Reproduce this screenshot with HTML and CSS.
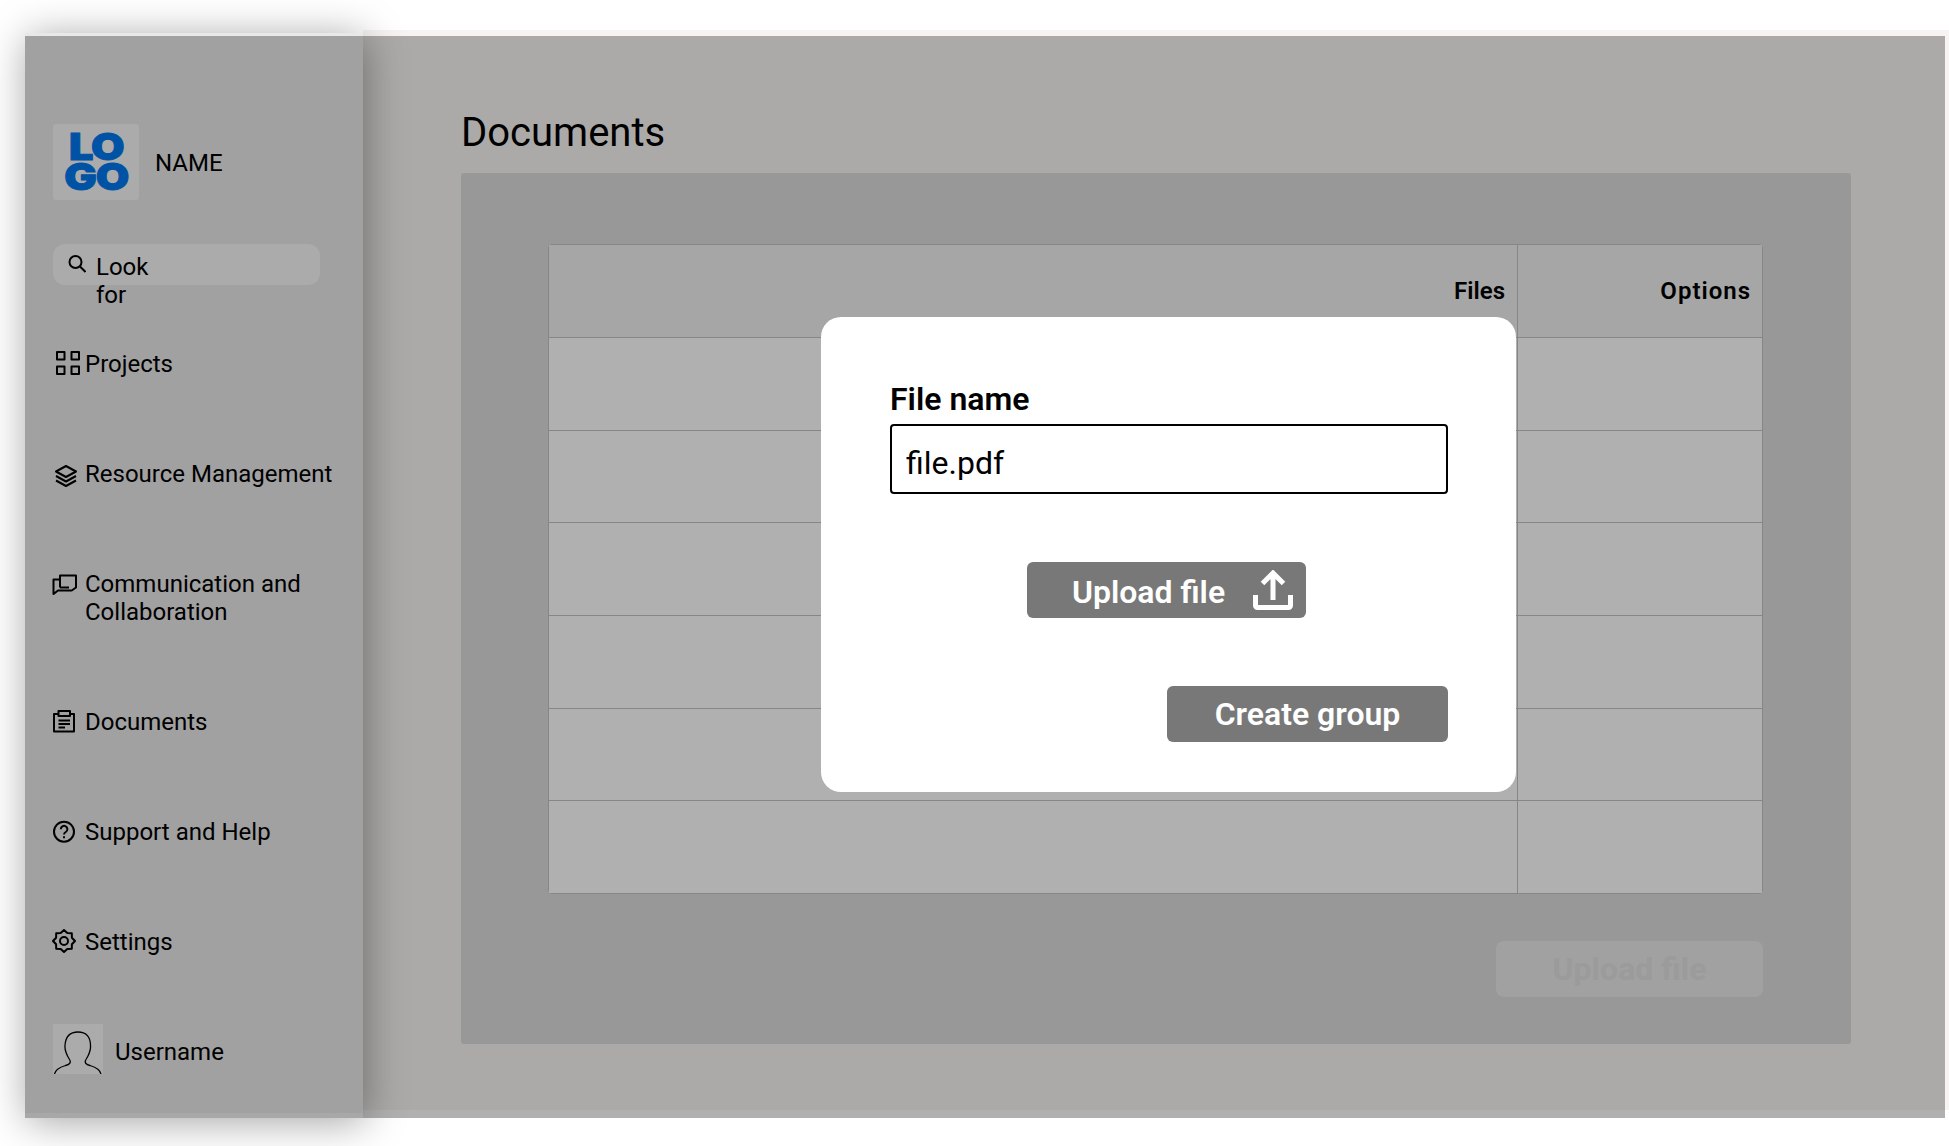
FILE: index.html

```html
<!DOCTYPE html>
<html lang="en">
<head>
  <meta charset="UTF-8" />
  <title>Documents</title>
  <link rel="stylesheet" href="styles.css">
</head>
<body>

<div class="page">
  <aside class="sidebar">
    <div class="brand">
      <div class="logo"><span>LO</span><span>GO</span></div>
      <span class="brand-name">NAME</span>
    </div>

    <div class="search">
      <svg class="search-icon" viewBox="0 0 18 18"><circle cx="7.500" cy="7" r="6"/><path d="M12 11.500l5.500 5.500"/></svg>
      <span class="search-text">Look for</span>
    </div>

    <nav class="nav">
      <a class="nav-item">
        <svg class="icon" viewBox="0 0 30 28"><rect x="5" y="2" width="7.500" height="7.500"/><rect x="19.500" y="2" width="7.500" height="7.500"/><rect x="5" y="16.500" width="7.500" height="7.500"/><rect x="19.500" y="16.500" width="7.500" height="7.500"/></svg>
        <span>Projects</span>
      </a>
      <a class="nav-item">
        <svg class="icon" viewBox="0 0 30 28"><path d="M14 6l10 5.500-10 5.500-10-5.500z"/><path d="M4 16l10 5.500L24 16"/><path d="M4 20.500L14 26l10-5.500"/></svg>
        <span>Resource Management</span>
      </a>
      <a class="nav-item">
        <svg class="icon" viewBox="0 0 30 28"><path d="M8 17.500V5.500h16v12l-5 3.500"/><path d="M8 17.500h9"/><path d="M8 9.500H1.500V24L6 20.500h13"/></svg>
        <span>Communication and Collaboration</span>
      </a>
      <a class="nav-item">
        <svg class="icon" viewBox="0 0 30 28"><path d="M6 6H2v17.500h20V6h-4"/><path d="M6.500 3H18v5H6.500z"/><path d="M6.500 12.500H18M6.500 16H18M6.500 19.500H13"/></svg>
        <span>Documents</span>
      </a>
      <a class="nav-item">
        <svg class="icon" viewBox="0 0 30 28"><circle cx="12" cy="13.700" r="10"/><path d="M8.800 11.200a3.300 3.300 0 1 1 5 2.800c-1.200.7-1.800 1.300-1.800 2.600"/><path d="M12 18.300v2"/></svg>
        <span>Support and Help</span>
      </a>
      <a class="nav-item">
        <svg class="icon" viewBox="0 0 30 28"><path d="M23 13l-3.100-3.300-.1-4.500-4.500-.15L12 2 8.700 5.050l-4.500.15-.1 4.500L1 13l3.100 3.300.1 4.500 4.500.15L12 24l3.300-3.050 4.500-.15.1-4.500z"/><circle cx="12" cy="13" r="4"/></svg>
        <span>Settings</span>
      </a>
    </nav>

    <div class="user">
      <div class="avatar">
        <svg width="50" height="50" viewBox="0 0 50 50"><path d="M1.500 50c1-5 6-7 11-8.500 4-1 6-3 4-6-3-5-5-9-4.500-14C12.500 13 17 8 25 8s12.500 5 12.500 13.500c.5 5-1.500 9-4.500 14-2 3 0 5 4 6 5 1.500 10 3.500 11 8.500"/></svg>
      </div>
      <span class="user-name">Username</span>
    </div>
  </aside>

  <div class="content">
    <main class="main">
      <h1>Documents</h1>
      <section class="panel">
        <table class="files">
          <thead>
            <tr><th class="th-files">Files</th><th class="th-options">Options</th></tr>
          </thead>
          <tbody>
            <tr><td></td><td></td></tr>
            <tr><td></td><td></td></tr>
            <tr><td></td><td></td></tr>
            <tr><td></td><td></td></tr>
            <tr><td></td><td></td></tr>
            <tr><td></td><td></td></tr>
          </tbody>
        </table>
        <div class="panel-actions">
          <button class="btn-disabled">Upload file</button>
        </div>
      </section>
    </main>
    <div class="strip-bottom"></div>
  </div>

  <div class="modal">
    <label class="field-label">File name</label>
    <div class="field">file.pdf</div>
    <button class="btn btn-upload">
      <span class="btn-upload-text">Upload file</span>
      <svg width="40" height="40" viewBox="0 0 40 40"><path d="M20 30V4M9.500 13.500L20 3l10.500 10.500"/><path d="M2.500 25v10.500a2 2 0 0 0 2 2h31a2 2 0 0 0 2-2V25"/></svg>
    </button>
    <button class="btn btn-create">Create group</button>
  </div>
</div>

</body>
</html>
```

FILE: styles.css

```css
:root {
  --sidebar: #a1a1a1;
  --main: #acaaa8;
  --panel: #989898;
  --tile: #ababab;
  --line: #868686;
  --button: #787878;
  --blush: #f8f3f3;
}

* {
  box-sizing: border-box;
  margin: 0;
  padding: 0;
}

body {
  min-height: 1146px;
  padding-top: 30px;
  background: #fff;
  color: #000;
  font-family: Roboto, sans-serif;
  font-size: 24px;
  line-height: 28px;
  overflow: hidden;
}

.page {
  position: relative;
  display: flex;
  width: 1924px;
  height: 1088px;
  margin-left: 25px;
}

/* Sidebar */
.sidebar {
  position: relative;
  z-index: 1;
  display: flex;
  flex-direction: column;
  flex: 0 0 338px;
  margin-top: 3px;
  padding: 88px 28px 0;
  background: var(--sidebar);
  border-top: 3px solid #e8e8e8;
  border-bottom: 5px solid #a8a8a8;
  box-shadow: 2px 4px 38px rgba(0, 0, 0, 0.36);
}

.brand {
  display: flex;
  align-items: center;
  gap: 16px;
}

.brand-name {
  padding-top: 2px;
}

.logo {
  display: flex;
  flex-direction: column;
  align-items: center;
  justify-content: center;
  width: 86px;
  height: 76px;
  background: var(--tile);
  border-radius: 3px;
  color: #0052a5;
  font-family: Inter, sans-serif;
  font-size: 37px;
  font-weight: 900;
  line-height: 30px;
  letter-spacing: -1px;
}

.logo span {
  transform: scaleX(1.17);
  -webkit-text-stroke: 1px #0052a5;
}

.search {
  display: flex;
  align-items: flex-start;
  gap: 11px;
  width: 267px;
  height: 41px;
  margin-top: 44px;
  padding: 11px 15px 0;
  background: var(--tile);
  border-radius: 12px;
}

.search-icon {
  flex: none;
  width: 18px;
  height: 18px;
  fill: none;
  stroke: #000;
  stroke-width: 2;
}

.search-text {
  width: 60px;
  margin: -2px 0 0 -1px;
}

.nav {
  display: flex;
  flex-direction: column;
  gap: 82px;
  margin-top: 65px;
}

.nav-item {
  display: flex;
  gap: 3px;
}

/* icon boxes line up with the first text line */
.icon {
  flex: none;
  width: 30px;
  height: 28px;
  margin-left: -1px;
  fill: none;
  stroke: #000;
  stroke-width: 2;
  stroke-linejoin: round;
}

.user {
  display: flex;
  align-items: center;
  gap: 12px;
  margin-top: 68px;
}

.user-name {
  margin-top: 5px;
}

.avatar {
  width: 50px;
  height: 50px;
  background: var(--tile);
}

.avatar svg {
  display: block;
  fill: none;
  stroke: #000;
  stroke-width: 1.300;
}

/* Main */
.content {
  display: flex;
  flex-direction: column;
  flex: 1;
  padding-top: 6px;
  background: var(--blush);
}

.strip-bottom {
  height: 8px;
  margin-right: 4px;
  background: #b0b0b0;
  box-shadow: 4px 0 0 #fff;
}

.main {
  flex: 1;
  margin-right: 4px;
  padding: 73px 94px 0 98px;
  background: var(--main);
}

h1 {
  font-size: 40px;
  font-weight: 400;
  line-height: 47px;
  margin-bottom: 17px;
}

.panel {
  height: 871px;
  padding: 71px 88px 0 87px;
  background: var(--panel);
  border-radius: 3px;
}

.files {
  width: 100%;
  height: 650px;
  border: 1px solid var(--line);
  border-radius: 4px;
  border-spacing: 0;
  table-layout: fixed;
}

.files th {
  height: 92px;
  background: #a6a6a6;
  font-size: 24px;
  font-weight: 600;
  text-align: right;
}

.files .th-files {
  padding-right: 12px;
}

.files .th-options {
  padding-right: 11px;
  letter-spacing: 1px;
}

.files td {
  background: #b0b0b0;
  border-top: 1px solid var(--line);
}

.files th:first-child,
.files td:first-child {
  width: 969px;
  border-right: 1px solid var(--line);
}

.panel-actions {
  display: flex;
  justify-content: flex-end;
  margin-top: 47px;
}

.btn-disabled {
  width: 267px;
  height: 56px;
  background: #a1a1a1;
  border: none;
  border-radius: 8px;
  color: #9b9b9b;
  font-family: Roboto, sans-serif;
  font-size: 32px;
  font-weight: 700;
}

/* Modal */
.modal {
  position: absolute;
  z-index: 2;
  left: 796px;
  top: 287px;
  display: flex;
  flex-direction: column;
  width: 695px;
  height: 475px;
  padding: 63px 68px 0 69px;
  background: #fff;
  border-radius: 20px;
}

.field-label {
  font-size: 32px;
  font-weight: 600;
  line-height: 38px;
  margin-bottom: 6px;
}

.field {
  display: flex;
  align-items: center;
  height: 70px;
  padding: 7px 0 0 14px;
  border: 2px solid #000;
  border-radius: 4px;
  font-size: 32px;
}

.btn {
  display: flex;
  align-items: center;
  justify-content: center;
  height: 56px;
  background: var(--button);
  border: none;
  border-radius: 6px;
  color: #fff;
  font-family: Roboto, sans-serif;
  font-size: 32px;
  font-weight: 600;
}

.btn-upload {
  align-self: flex-start;
  gap: 28px;
  width: 279px;
  margin: 68px 0 0 137px;
  padding-left: 32px;
}

.btn-upload-text {
  padding-top: 4px;
}

.btn-upload svg {
  fill: none;
  stroke: #fff;
  stroke-width: 5;
}

.btn-create {
  align-self: flex-end;
  width: 281px;
  margin-top: 68px;
}
```
